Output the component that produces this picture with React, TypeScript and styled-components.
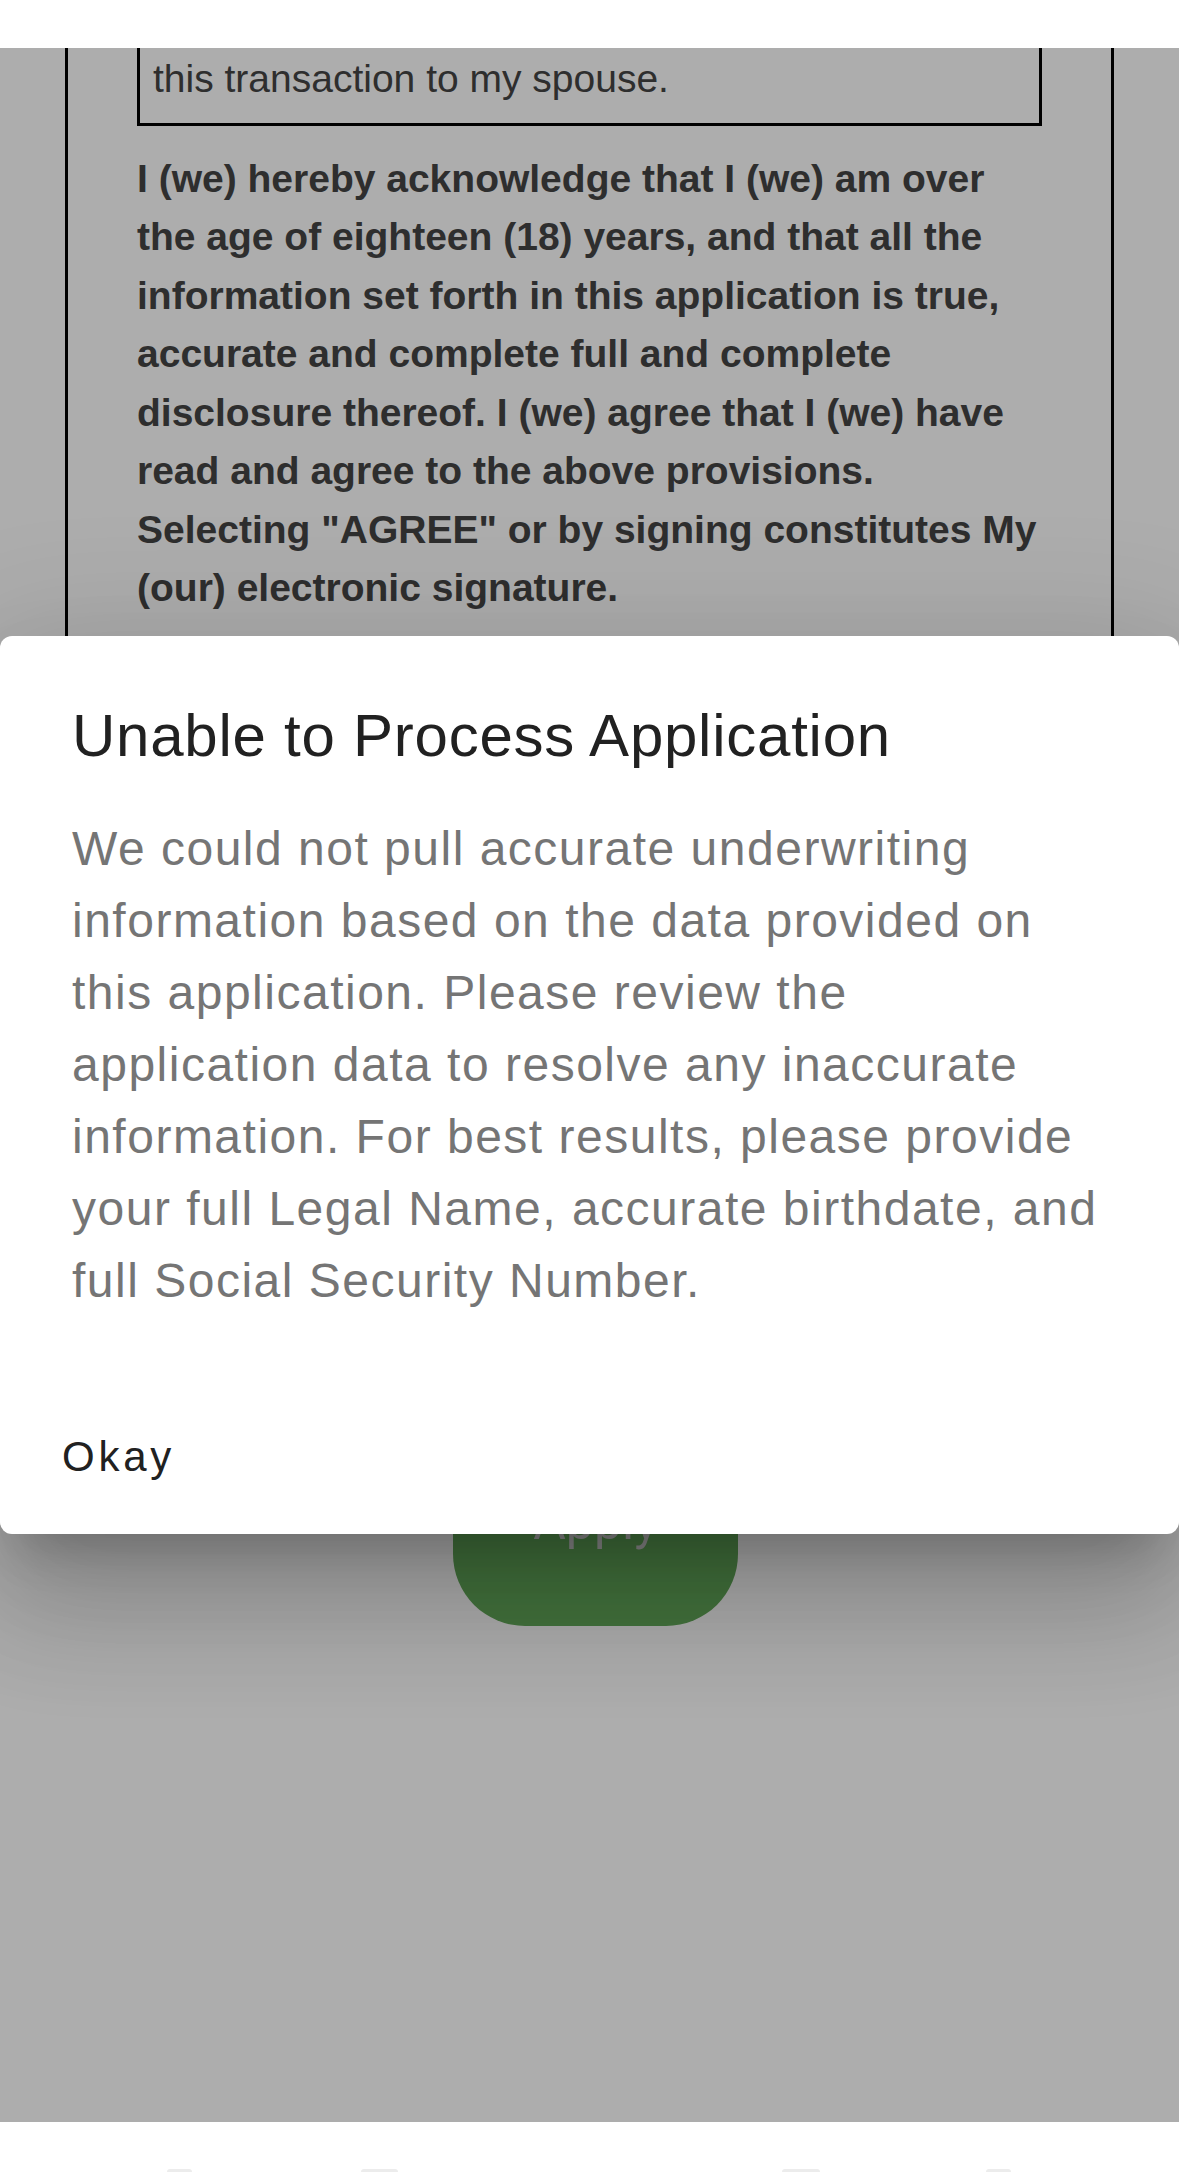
import React from "react";
import styled, { createGlobalStyle } from "styled-components";

const GlobalStyle = createGlobalStyle`
  html, body {
    margin: 0;
    padding: 0;
    background: #ffffff;
  }
  body {
    font-family: "Liberation Sans", Arial, sans-serif;
  }
  * {
    box-sizing: border-box;
  }
`;

const Screen = styled.div`
  position: relative;
  width: 1179px;
  height: 2172px;
  display: flex;
  flex-direction: column;
  overflow: hidden;
  background: #ffffff;
`;

const StatusBar = styled.div`
  height: 48px;
  flex-shrink: 0;
  background: #ffffff;
`;

const Viewport = styled.main`
  position: relative;
  flex: 1;
  overflow: hidden;
  background: #ffffff;
`;

const FormFrame = styled.section`
  margin: 0 65px;
  height: 900px;
  padding: 0 69px;
  border-left: 3px solid #000;
  border-right: 3px solid #000;
`;

const ConsentBox = styled.div`
  margin-top: -17px;
  padding: 16px 13px 14px;
  border: 3px solid #000;
  font-size: 39px;
  line-height: 58.5px;
  color: #454545;
`;

const Acknowledgement = styled.p`
  margin: 24px 0 0;
  width: 910px;
  font-size: 39px;
  line-height: 58.5px;
  font-weight: 700;
  color: #454545;
`;

const ApplyRow = styled.div`
  display: flex;
  justify-content: center;
  padding-left: 12px;
  margin-top: 487px;
`;

const ApplyButton = styled.button`
  width: 285px;
  height: 208px;
  border: none;
  border-radius: 72px;
  background: #64aa5a;
  color: #cfcfcf;
  font-family: Roboto, "Liberation Sans", sans-serif;
  font-size: 50px;
  padding: 0;
`;

const NavBar = styled.nav`
  height: 50px;
  flex-shrink: 0;
  display: flex;
  align-items: flex-end;
  background: #ffffff;
  padding-left: 167px;
`;

const NavStub = styled.span<{ $w: number; $gap: number }>`
  width: ${({ $w }) => $w}px;
  margin-left: ${({ $gap }) => $gap}px;
  height: 3px;
  border-radius: 3px 3px 0 0;
  background: #ececec;
`;

const Scrim = styled.div`
  position: absolute;
  left: 0;
  right: 0;
  top: 48px;
  bottom: 50px;
  background: rgba(0, 0, 0, 0.32);
  display: flex;
  align-items: center;
  justify-content: center;
`;

const Dialog = styled.div`
  width: 1179px;
  background: #ffffff;
  border-radius: 12px;
  box-shadow: 0 33px 45px -21px rgba(0, 0, 0, 0.2),
    0 72px 114px 9px rgba(0, 0, 0, 0.14),
    0 27px 138px 24px rgba(0, 0, 0, 0.12);
`;

const Title = styled.h2`
  margin: 0;
  padding: 64px 72px 0;
  font-size: 60px;
  line-height: 72px;
  font-weight: 400;
  letter-spacing: 0.75px;
  color: #212121;
`;

const Message = styled.p`
  margin: 0;
  padding: 41px 72px 62px;
  font-size: 48px;
  line-height: 72px;
  letter-spacing: 1.5px;
  color: #757575;
`;

const Actions = styled.div`
  display: flex;
  padding: 24px 24px 23px;
`;

const TextButton = styled.button`
  height: 108px;
  padding: 0 38px;
  border: none;
  background: transparent;
  font-family: "Liberation Sans", Arial, sans-serif;
  font-size: 42px;
  letter-spacing: 3.75px;
  color: #212121;
  display: flex;
  align-items: center;
`;

export default function App() {
  return (
    <>
      <GlobalStyle />
      <Screen>
        <StatusBar />
        <Viewport>
          <FormFrame>
            <ConsentBox>this transaction to my spouse.</ConsentBox>
            <Acknowledgement>
              I (we) hereby acknowledge that I (we) am over the age of eighteen
              (18) years, and that all the information set forth in this
              application is true, accurate and complete full and complete
              disclosure thereof. I (we) agree that I (we) have read and agree
              to the above provisions. Selecting "AGREE" or by signing
              constitutes My (our) electronic signature.
            </Acknowledgement>
          </FormFrame>
          <ApplyRow>
            <ApplyButton>Apply</ApplyButton>
          </ApplyRow>
        </Viewport>
        <NavBar>
          <NavStub $w={25} $gap={0} />
          <NavStub $w={37} $gap={169} />
          <NavStub $w={38} $gap={384} />
          <NavStub $w={25} $gap={166} />
        </NavBar>
        <Scrim>
          <Dialog role="dialog">
            <Title>Unable to Process Application</Title>
            <Message>
              We could not pull accurate underwriting information based on the
              data provided on this application. Please review the application
              data to resolve any inaccurate information. For best results,
              please provide your full Legal Name, accurate birthdate, and full
              Social Security Number.
            </Message>
            <Actions>
              <TextButton>Okay</TextButton>
            </Actions>
          </Dialog>
        </Scrim>
      </Screen>
    </>
  );
}
